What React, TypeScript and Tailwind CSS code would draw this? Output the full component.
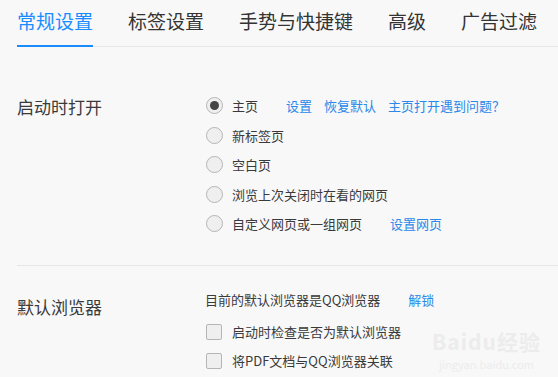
import React from 'react';

const tabs = ['常规设置', '标签设置', '手势与快捷键', '高级', '广告过滤'];

const Radio = ({ checked }: { checked?: boolean }) => (
  <span className="flex h-[17px] w-[17px] shrink-0 items-center justify-center rounded-full border border-[#b5b5b5] bg-[#efefef]">
    {checked && <span className="h-[9px] w-[9px] rounded-full bg-[#454545]" />}
  </span>
);

const Checkbox = () => (
  <span className="h-[16px] w-[16px] shrink-0 rounded-[2px] border border-[#b5b5b5] bg-[#efefef]" />
);

export default function App() {
  const options = [
    { label: '主页', checked: true, links: ['设置', '恢复默认', '主页打开遇到问题？'] },
    { label: '新标签页' },
    { label: '空白页' },
    { label: '浏览上次关闭时在看的网页' },
    { label: '自定义网页或一组网页', links: ['设置网页'] },
  ];

  return (
    <div
      className="relative h-[377px] w-[558px] overflow-hidden bg-[#f8f8f8] text-[#3a3a3a]"
      style={{ fontFamily: '"Noto Sans CJK SC", "Noto Sans", sans-serif' }}
    >
      {/* Tabs */}
      <div className="ml-[17px] flex h-[47px] gap-[35px] border-b border-[#e6e6e6]">
        {tabs.map((t, i) => (
          <div
            key={t}
            className={`relative flex h-full items-center pb-[3px] text-[19px] ${i === 0 ? 'text-[#1a8cff]' : 'text-[#333]'}`}
          >
            {t}
            {i === 0 && <span className="absolute bottom-[-1px] left-0 h-[2px] w-full bg-[#1a8cff]" />}
          </div>
        ))}
      </div>

      {/* 启动时打开 */}
      <div className="ml-[17px] flex pt-[44px] pb-[26px] border-b border-[#e6e6e6]">
        <div className="w-[189px] pt-[3px] text-[17px] leading-[26px]">启动时打开</div>
        <div className="flex flex-col text-[13px]">
          {options.map((o) => (
            <div key={o.label} className="flex h-[29.5px] items-center">
              <Radio checked={o.checked} />
              <span className="ml-[9px]">{o.label}</span>
              {o.links && (
                <span className="ml-[28px] flex gap-[12px] text-[#2b88e8]">
                  {o.links.map((l) => (
                    <span key={l}>{l}</span>
                  ))}
                </span>
              )}
            </div>
          ))}
        </div>
      </div>

      {/* 默认浏览器 */}
      <div className="ml-[17px] flex pt-[24px]">
        <div className="w-[189px] pt-[4px] text-[17px] leading-[26px]">默认浏览器</div>
        <div className="flex flex-col text-[13px]">
          <div className="flex h-[20px] items-center">
            <span className="-ml-[1px]">目前的默认浏览器是QQ浏览器</span>
            <span className="ml-[28px] text-[#2b88e8]">解锁</span>
          </div>
          <div className="mt-[14px] flex h-[16px] items-center">
            <Checkbox />
            <span className="ml-[10px]">启动时检查是否为默认浏览器</span>
          </div>
          <div className="mt-[13px] flex h-[16px] items-center">
            <Checkbox />
            <span className="ml-[10px]">将PDF文档与QQ浏览器关联</span>
          </div>
        </div>
      </div>

      {/* watermark */}
      <div className="pointer-events-none absolute left-[432px] top-[330px] flex flex-col items-center gap-[7px] text-[#ececec]">
        <span className="text-[21px] font-bold leading-[22px] tracking-[1px]">Baidu经验</span>
        <span className="text-[11px] leading-[11px]">jingyan.baidu.com</span>
      </div>
    </div>
  );
}
